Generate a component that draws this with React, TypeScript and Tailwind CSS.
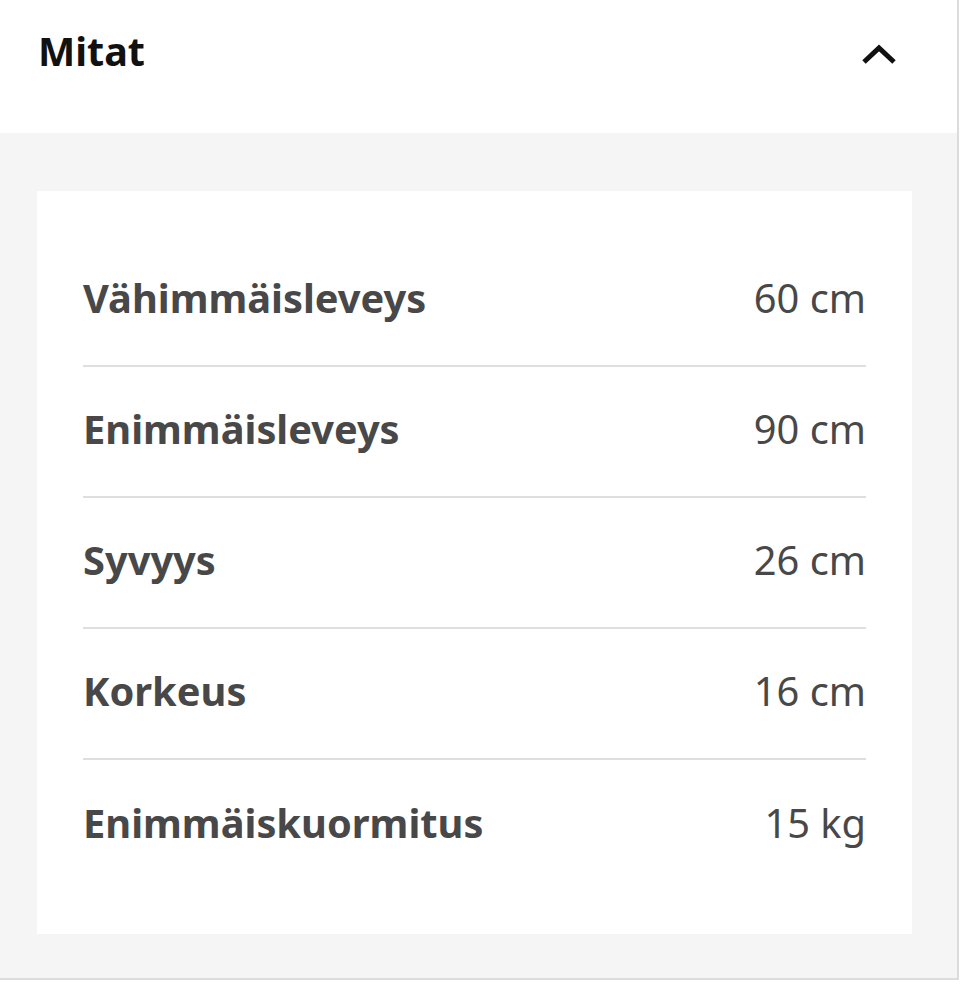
const rows = [
  { label: "Vähimmäisleveys", value: "60 cm" },
  { label: "Enimmäisleveys", value: "90 cm" },
  { label: "Syvyys", value: "26 cm" },
  { label: "Korkeus", value: "16 cm" },
  { label: "Enimmäiskuormitus", value: "15 kg" },
];

export default function App() {
  return (
    <div className="w-[960px] h-[985px] bg-white" style={{ fontFamily: '"Noto Sans", "Open Sans", sans-serif' }}>
      <div className="w-[959px] border-r-2 border-b-2 border-[#dcdcdc]">
        {/* Header */}
        <div className="h-[133px] flex items-start justify-between pl-[38px] pr-[60px] pt-[22px]">
          <h2 className="text-[39.5px] leading-[58px] font-bold text-[#111111]">Mitat</h2>
          <svg width="36" height="24" viewBox="0 0 36 24" className="mt-[20px]" fill="none">
            <path d="M3 20 L18 6 L33 20" stroke="#111111" strokeWidth="5" />
          </svg>
        </div>

        {/* Body */}
        <div className="bg-[#f5f5f5] pt-[58px] pb-[44px] pl-[37px] pr-[45px]">
          <div className="bg-white px-[46px] pt-[45px] pb-[43px]">
            {rows.map((r, i) => (
              <div
                key={r.label}
                className={`flex items-center justify-between h-[131px] pb-[6px] text-[#484848] ${
                  i < rows.length - 1 ? "border-b-2 border-[#dfdfdf]" : ""
                }`}
              >
                <span className="text-[39.8px] font-bold">{r.label}</span>
                <span className="text-[39.8px]">{r.value}</span>
              </div>
            ))}
          </div>
        </div>
      </div>
    </div>
  );
}
